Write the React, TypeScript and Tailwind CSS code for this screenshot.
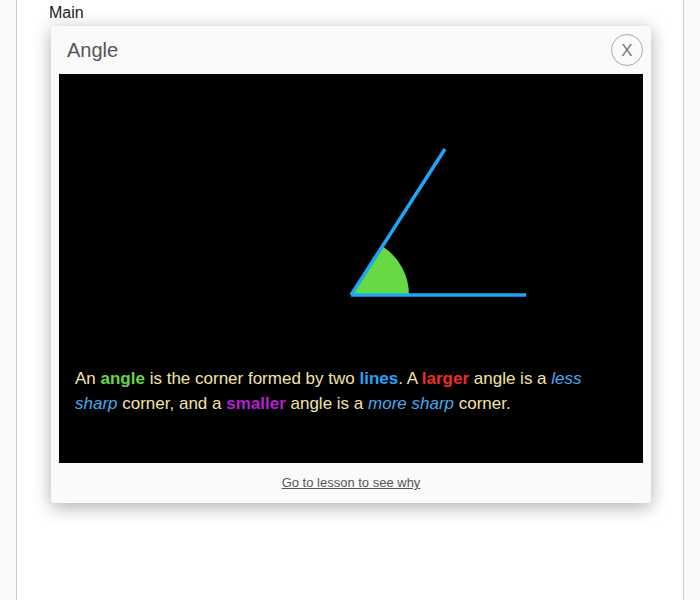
import React from 'react';

const AngleFigure: React.FC = () => (
  <svg width="584" height="292" viewBox="0 0 584 292" className="block">
    <path d="M292 221 L350 221 A58 58 0 0 0 323.4 172.2 Z" fill="#66d944" />
    <line x1="292" y1="221" x2="467" y2="221" stroke="#1ea7f7" strokeWidth="3.5" />
    <line x1="292" y1="221" x2="386" y2="75" stroke="#1ea7f7" strokeWidth="3.5" />
  </svg>
);

const App: React.FC = () => {
  return (
    <div className="min-h-[600px] bg-[#f9f9f9] font-['Liberation_Sans',Arial,sans-serif]">
      <div className="ml-[16px] mr-[16px] min-h-[600px] border-x border-[#cccccc] bg-white">
        <div className="pl-[32px] pt-[4px] text-[16px] leading-[18px] text-[#222]">Main</div>
        <div className="ml-[34px] mt-[4px] w-[600px] rounded-[3px] bg-[#fafafa] shadow-[0_4px_18px_rgba(0,0,0,0.32)]">
          <div className="flex h-[48px] items-center justify-between px-2">
            <h3 className="pl-2 text-[20px] text-[#555]">Angle</h3>
            <button className="flex h-[32px] w-[32px] items-center justify-center rounded-full border border-[#aaaaaa] text-[17px] leading-none text-[#777]">
              X
            </button>
          </div>
          <div className="mx-2 h-[389px] bg-black">
            <AngleFigure />
            <p className="px-4 text-[17px] leading-[25px] text-[#f3e4a8]">
              An <b className="text-[#66d944]">angle</b> is the corner formed by two{' '}
              <b className="text-[#1ea7f7]">lines</b>. A <b className="text-[#ee2e22]">larger</b> angle is a{' '}
              <i className="text-[#45aaee]">less sharp</i> corner, and a{' '}
              <b className="text-[#b322cc]">smaller</b> angle is a{' '}
              <i className="text-[#45aaee]">more sharp</i> corner.
            </p>
          </div>
          <div className="flex h-[40px] items-center justify-center">
            <a href="#" className="text-[13px] text-[#555] underline">
              Go to lesson to see why
            </a>
          </div>
        </div>
      </div>
    </div>
  );
};

export default App;
